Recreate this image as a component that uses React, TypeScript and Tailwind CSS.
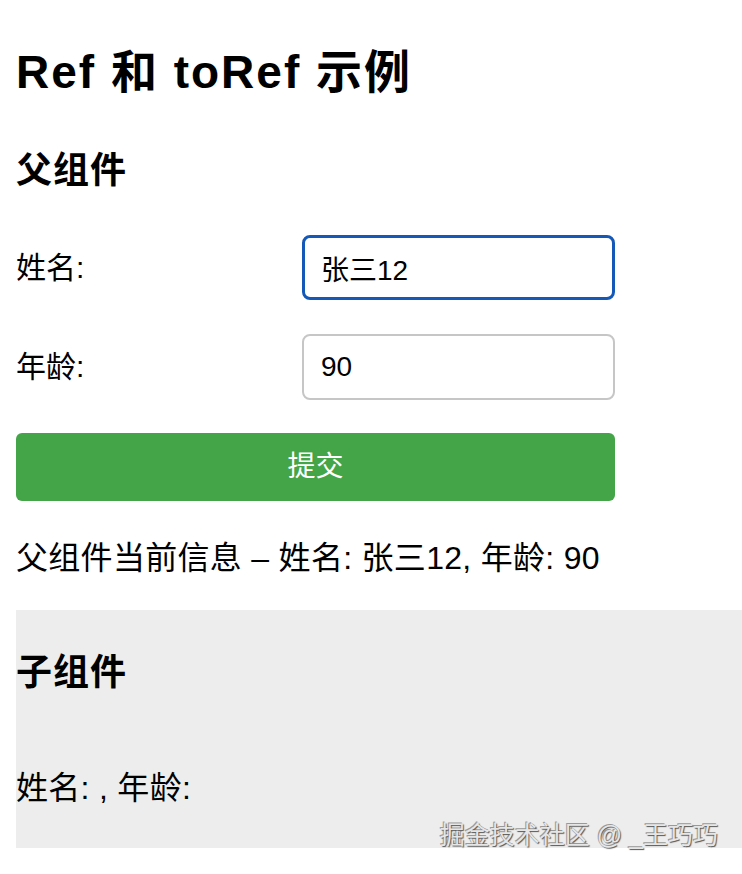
import { useState } from "react";

const font = { fontFamily: '"Liberation Sans", "Noto Sans CJK SC", sans-serif' };

function Child({ name, age }: { name?: string; age?: string }) {
  return (
    <section className="bg-[#ededed] pt-[38px] h-[238px] relative">
      <h2 className="text-[36px] leading-[50px] font-bold tracking-[1px] text-black">子组件</h2>
      <p className="mt-[70px] text-[32px] leading-[40px] tracking-[0.3px] text-black">
        姓名: {name}, 年龄: {age}
      </p>
      {/* watermark */}
      <span className="absolute right-[24px] bottom-[-4px] text-[25px] leading-[34px] text-[#e6e6e6] [text-shadow:1px_1px_1px_#555,-1px_-1px_0_#999]">
        掘金技术社区 @ _王巧巧
      </span>
    </section>
  );
}

export default function App() {
  const [name, setName] = useState("张三12");
  const [age, setAge] = useState("90");

  return (
    <div className="min-h-[874px] bg-white pl-4 text-black" style={font}>
      <h1 className="pt-[41px] text-[46px] leading-[62px] font-bold tracking-[2px]">Ref 和 toRef 示例</h1>

      <h2 className="mt-[43px] text-[36px] leading-[50px] font-bold tracking-[1px]">父组件</h2>

      <div className="w-[599px]">
        <div className="mt-[39px] flex items-center">
          <label className="w-[286px] text-[30px] leading-[40px]">姓名:</label>
          <input
            value={name}
            onChange={(e) => setName(e.target.value)}
            className="w-[313px] h-[65px] rounded-[8px] border-[3px] border-[#1559b8] px-[16px] text-[28px] outline-none"
          />
        </div>
        <div className="mt-[34px] flex items-center">
          <label className="w-[286px] text-[30px] leading-[40px]">年龄:</label>
          <input
            value={age}
            onChange={(e) => setAge(e.target.value)}
            className="w-[313px] h-[66px] rounded-[8px] border-2 border-[#c6c6c6] px-[17px] text-[28px] outline-none"
          />
        </div>
        <button className="mt-[33px] w-full h-[68px] rounded-[6px] bg-[#43a547] text-white text-[28px]">
          提交
        </button>
      </div>

      <p className="mt-[37px] text-[32px] leading-[40px] tracking-[0.3px]">
        父组件当前信息 – 姓名: {name}, 年龄: {age}
      </p>

      <div className="mt-[32px]">
        <Child />
      </div>
    </div>
  );
}
